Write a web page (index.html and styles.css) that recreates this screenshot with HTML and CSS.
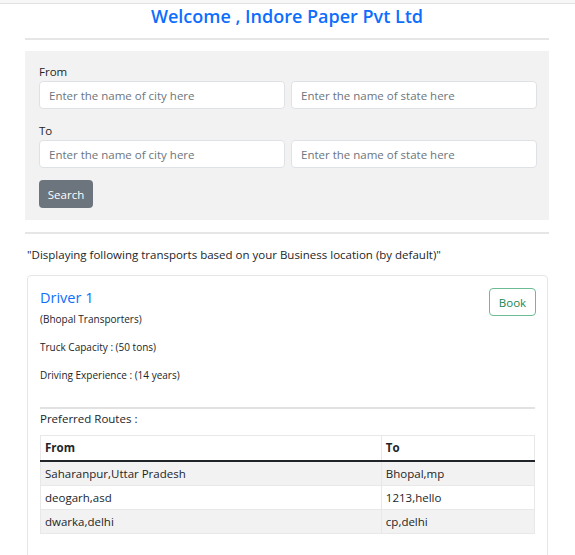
FILE: index.html
```html
<!DOCTYPE html>
<html>
<head>
<meta charset="utf-8">
<link rel="stylesheet" href="styles.css">
</head>
<body>
<div class="topbar"></div>
<div class="container">
  <h3 class="title">Welcome , Indore Paper Pvt Ltd</h3>
  <hr class="rule rule-top">
  <form class="search">
    <label class="lbl">From</label>
    <div class="pair">
      <input class="field" placeholder="Enter the name of city here">
      <input class="field" placeholder="Enter the name of state here">
    </div>
    <label class="lbl lbl-to">To</label>
    <div class="pair">
      <input class="field" placeholder="Enter the name of city here">
      <input class="field" placeholder="Enter the name of state here">
    </div>
    <button type="button" class="btn-search">Search</button>
  </form>
  <hr class="rule rule-mid">
  <p class="note">"Displaying following transports based on your Business location (by default)"</p>
  <div class="card">
    <div class="card-head">
      <div class="info">
        <h5 class="driver">Driver 1</h5>
        <p class="small">(Bhopal Transporters)</p>
        <p class="small">Truck Capacity : (50 tons)</p>
        <p class="small">Driving Experience : (14 years)</p>
      </div>
      <button type="button" class="btn-book">Book</button>
    </div>
    <hr class="rule rule-card">
    <p class="routes-label">Preferred Routes :</p>
    <table class="routes">
      <thead>
        <tr><th class="col-from">From</th><th>To</th></tr>
      </thead>
      <tbody>
        <tr class="odd"><td>Saharanpur,Uttar Pradesh</td><td>Bhopal,mp</td></tr>
        <tr><td>deogarh,asd</td><td>1213,hello</td></tr>
        <tr class="odd"><td>dwarka,delhi</td><td>cp,delhi</td></tr>
      </tbody>
    </table>
  </div>
</div>
</body>
</html>
```
FILE: styles.css
```css
* { box-sizing: border-box; }
body {
  margin: 0;
  font-family: "Open Sans", "Noto Sans", sans-serif;
  font-size: 11.5px;
  line-height: 18px;
  color: #212529;
  background: #fff;
}
.topbar {
  height: 4px;
  background: #f7f7f7;
  border-bottom: 1px solid #e2e2e2;
}
.container {
  width: 524px;
  margin-left: 25px;
}
.title {
  margin: 0;
  font-size: 18px;
  font-weight: 600;
  line-height: 24px;
  color: #0d6efd;
  text-align: center;
}
.rule {
  border: 0;
  height: 2px;
  background: #e6e6e6;
  margin: 0;
}
.rule-top { margin-top: 10px; }
.search {
  margin-top: 11px;
  background: #f2f2f2;
  padding: 12px 12px 12px 14px;
  display: flex;
  flex-direction: column;
  align-items: flex-start;
}
.lbl { display: block; }
.lbl-to { margin-top: 13px; }
.pair {
  display: flex;
  gap: 6px;
  width: 100%;
}
.field {
  flex: 1;
  height: 28px;
  border: 1px solid #dee2e6;
  border-radius: 4px;
  padding: 0 9px;
  font-family: inherit;
  font-size: 11.5px;
  background: #fff;
  color: #212529;
}
.field::placeholder { color: #6c757d; }
.btn-search {
  margin-top: 12px;
  width: 54px;
  height: 28px;
  border: 0;
  border-radius: 4px;
  background: #6c757d;
  color: #fff;
  font-family: inherit;
  font-size: 11.5px;
  padding: 0;
}
.rule-mid { margin-top: 12px; }
.note {
  margin: 12px 0 11px 2px;
}
.card {
  margin: 0 1px 0 2px;
  border: 1px solid #e6e6e6;
  border-radius: 4px;
  padding: 12px 12px 30px 12px;
}
.card-head {
  display: flex;
  justify-content: space-between;
  align-items: flex-start;
}
.driver {
  margin: 1px 0 4px;
  font-size: 14.5px;
  font-weight: 400;
  line-height: 18px;
  color: #0d6efd;
}
.small {
  margin: 0 0 12px;
  font-size: 10px;
  line-height: 16px;
}
.small:last-child { margin-bottom: 0; }
.btn-book {
  width: 47px;
  height: 28px;
  margin-right: -1px;
  border: 1px solid #6dbb95;
  border-radius: 4px;
  background: #fff;
  color: #198754;
  font-family: inherit;
  font-size: 11.5px;
  padding: 0;
}
.rule-card {
  margin-top: 24px;
  background: #e2e2e2;
}
.routes-label {
  margin: 1px 0 7px;
}
.routes {
  width: 100%;
  border-collapse: collapse;
}
.routes th, .routes td {
  border: 1px solid #e8e8e8;
  padding: 3px 4px;
  text-align: left;
  line-height: 17px;
}
.routes th { font-weight: 700; line-height: 18px; }
.routes thead th { border-bottom: 2px solid #212529; }
.col-from { width: 69%; }
.routes tr.odd td { background: #f2f2f2; }
```
